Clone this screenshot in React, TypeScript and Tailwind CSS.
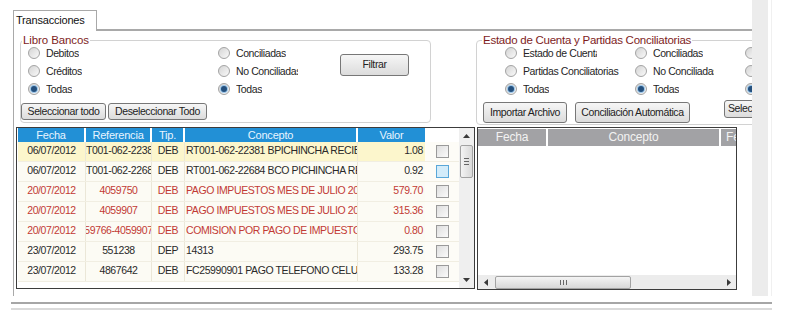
import React from "react";

type Row = {
  fecha: string;
  ref: string;
  tip: string;
  concepto: string;
  valor: string;
  red?: boolean;
  selected?: boolean;
  hover?: boolean;
};

const ROWS: Row[] = [
  { fecha: "06/07/2012", ref: "RT001-062-22381", tip: "DEB", concepto: "RT001-062-22381 BPICHINCHA RECIBO", valor: "1.08", selected: true },
  { fecha: "06/07/2012", ref: "RT001-062-22684", tip: "DEB", concepto: "RT001-062-22684 BCO PICHINCHA RET", valor: "0.92", hover: true },
  { fecha: "20/07/2012", ref: "4059750", tip: "DEB", concepto: "PAGO IMPUESTOS MES DE JULIO 2012", valor: "579.70", red: true },
  { fecha: "20/07/2012", ref: "4059907", tip: "DEB", concepto: "PAGO IMPUESTOS MES DE JULIO 2012", valor: "315.36", red: true },
  { fecha: "20/07/2012", ref: "59766-4059907", tip: "DEB", concepto: "COMISION POR PAGO DE IMPUESTO A LA RENTA", valor: "0.80", red: true },
  { fecha: "23/07/2012", ref: "551238", tip: "DEP", concepto: "14313", valor: "293.75" },
  { fecha: "23/07/2012", ref: "4867642", tip: "DEB", concepto: "FC25990901 PAGO TELEFONO CELULAR", valor: "133.28" },
];

const Radio = ({ label, checked, w }: { label: string; checked?: boolean; w?: string }) => (
  <div className="flex items-center h-[18px]">
    <div className="w-[12px] h-[12px] shrink-0 rounded-full border border-[#a3a3a3] bg-linear-to-br from-[#d4d4d4] to-[#fafafa] flex items-center justify-center">
      {checked && <div className="w-[6px] h-[6px] rounded-full bg-[#24507e] ring-1 ring-[#9cc7ea]" />}
    </div>
    <span className={`ml-[6px] whitespace-nowrap overflow-hidden leading-[14px] ${w ?? ""}`}>{label}</span>
  </div>
);

const Btn = ({ label, className }: { label: string; className: string }) => (
  <div
    className={`shrink-0 flex items-center justify-center whitespace-nowrap overflow-hidden border border-[#777] rounded-[3px] bg-linear-to-b from-[#f6f6f6] to-[#dcdcdc] text-[#222] ${className}`}
  >
    {label}
  </div>
);

const Check = ({ hover }: { hover?: boolean }) => (
  <div
    className={`w-[13px] h-[13px] border ${
      hover ? "border-[#5aa7d8] bg-[#d3ecfa]" : "border-[#9a9a9a] bg-linear-to-br from-[#dedede] to-[#fbfbfb]"
    }`}
  />
);

const Arrow = ({ dir }: { dir: "up" | "down" | "left" | "right" }) => {
  const pts = {
    up: "0,4 3.5,0 7,4",
    down: "0,0 3.5,4 7,0",
    left: "4,0 0,3.5 4,7",
    right: "0,0 4,3.5 0,7",
  }[dir];
  const vertical = dir === "up" || dir === "down";
  return (
    <svg width={vertical ? 7 : 4} height={vertical ? 4 : 7} viewBox={vertical ? "0 0 7 4" : "0 0 4 7"}>
      <polygon points={pts} fill="#3a3a3a" />
    </svg>
  );
};

const COLS = [
  { name: "Fecha", w: "w-[68px]", sep: true },
  { name: "Referencia", w: "w-[66px]", sep: true },
  { name: "Tip.", w: "w-[33px]", sep: true },
  { name: "Concepto", w: "w-[173px]", sep: true },
  { name: "Valor", w: "w-[67px]", sep: false },
];

const LibroTable = () => (
  <div className="shrink-0 ml-[2px] w-[459px] h-[162px] border border-[#3c3c3c] flex bg-white">
    <div className="w-[442px] pl-[1px] flex flex-col">
      <div className="flex h-[14px] shrink-0 text-[11px] tracking-[-0.2px]">
        {COLS.map((c) => (
          <div
            key={c.name}
            className={`${c.w} h-full bg-[#2290d6] text-[#e8f5ff] text-center leading-[14px] ${c.sep ? "border-r-2 border-white" : ""}`}
          >
            {c.name}
          </div>
        ))}
      </div>
      {ROWS.map((r, i) => {
        const tc = r.red ? "text-[#c23a34]" : "text-[#2a2a2a]";
        const bg = r.selected ? "bg-[#fcf6cc]" : "bg-[#fcfbf4]";
        return (
          <div key={i} className="flex h-[20px] border-b border-[#f1eee2]">
            <div className={`flex ${bg} ${tc} leading-[17px]`}>
              <div className="w-[68px] text-center border-r border-[#ebe7d8]">{r.fecha}</div>
              <div className="w-[66px] flex justify-center overflow-hidden whitespace-nowrap border-r border-[#ebe7d8]">
                <span className="shrink-0">{r.ref}</span>
              </div>
              <div className="w-[33px] text-center border-r border-[#ebe7d8]">{r.tip}</div>
              <div className="w-[173px] pl-[1px] overflow-hidden whitespace-nowrap border-r border-[#ebe7d8]">{r.concepto}</div>
              <div className="w-[67px] text-right pr-[2px]">{r.valor}</div>
            </div>
            <div className="w-[34px] bg-[#fdfcf7] flex items-center justify-center pl-[1px]">
              <Check hover={r.hover} />
            </div>
          </div>
        );
      })}
    </div>
    <div className="w-[15px] bg-[#efefef] flex flex-col items-center">
      <div className="h-[16px] flex items-center justify-center">
        <Arrow dir="up" />
      </div>
      <div className="w-[13px] h-[33px] mt-px border border-[#a2a2a2] rounded-[2px] bg-linear-to-r from-[#f4f4f4] to-[#d8d8d8] flex flex-col items-center justify-center gap-[2px]">
        <div className="w-[5px] h-px bg-[#666]" />
        <div className="w-[5px] h-px bg-[#666]" />
        <div className="w-[5px] h-px bg-[#666]" />
      </div>
      <div className="flex-1" />
      <div className="h-[16px] flex items-center justify-center">
        <Arrow dir="down" />
      </div>
    </div>
  </div>
);

const EstadoTable = () => (
  <div className="shrink-0 ml-[2px] w-[260px] h-[163px] border border-[#3c3c3c] flex flex-col bg-white overflow-hidden">
    <div className="flex h-[17px] mt-px shrink-0 text-[#f2f2f2] text-[12px] tracking-[-0.2px] leading-[17px]">
      <div className="w-[70px] shrink-0 bg-[#a2a2a5] text-center border-r-2 border-white">Fecha</div>
      <div className="w-[173px] shrink-0 bg-[#a2a2a5] text-center border-r-2 border-white">Concepto</div>
      <div className="flex-1 bg-[#a2a2a5] overflow-hidden whitespace-nowrap pl-[5px]">Fecha</div>
    </div>
    <div className="flex-1" />
    <div className="h-[14px] bg-[#ececec] flex items-center">
      <div className="w-[15px] flex justify-center">
        <Arrow dir="left" />
      </div>
      <div className="ml-[2px] w-[136px] h-[13px] border border-[#a2a2a2] rounded-[2px] bg-linear-to-b from-[#f4f4f4] to-[#d8d8d8] flex items-center justify-center gap-[2px]">
        <div className="w-px h-[5px] bg-[#666]" />
        <div className="w-px h-[5px] bg-[#666]" />
        <div className="w-px h-[5px] bg-[#666]" />
      </div>
      <div className="flex-1" />
      <div className="w-[15px] flex justify-center">
        <Arrow dir="right" />
      </div>
    </div>
  </div>
);

export default function App() {
  return (
    <div className="w-[800px] h-[321px] bg-white overflow-hidden font-['Liberation_Sans',Arial,sans-serif] text-[10.5px] tracking-[-0.4px] text-[#262626]">
      <div className="flex h-[296px]">
        <div className="w-[752px] shrink-0 pl-[13px] pt-[10px] flex flex-col overflow-hidden">
          <div className="flex h-[21px] shrink-0">
            <div className="w-[84px] shrink-0 border border-b-0 border-[#a9a9a9] bg-white pl-[2px] leading-[19px] text-[11px] tracking-[-0.2px] text-[#111]">
              Transacciones
            </div>
            <div className="flex-1 border-b-2 border-[#a9a9a9]" />
          </div>
          <div className="flex-1 border-l border-[#a9a9a9] flex flex-col">
            <div className="flex items-start mt-[9px] h-[85px] shrink-0">
              {/* Libro Bancos */}
              <div className="relative shrink-0 ml-[6px] w-[411px] h-[83px] border border-[#d2d2d2] rounded-[4px]">
                <span className="absolute left-[1px] top-[-8px] px-[1px] bg-white text-[11.5px] tracking-[-0.1px] leading-[14px] text-[#7e1d1d]">
                  Libro Bancos
                </span>
                <div className="flex pt-[3px]">
                  <div className="ml-[7px] w-[190px] shrink-0">
                    <Radio label="Debitos" />
                    <Radio label="Créditos" />
                    <Radio label="Todas" checked />
                  </div>
                  <div className="w-[122px] shrink-0">
                    <Radio label="Conciliadas" />
                    <Radio label="No Conciliadas" w="w-[62px]" />
                    <Radio label="Todas" checked />
                  </div>
                  <Btn label="Filtrar" className="mt-[10px] w-[69px] h-[22px]" />
                </div>
                <div className="flex gap-[2px] mt-[5px]">
                  <Btn label="Seleccionar todo" className="w-[85px] h-[17px]" />
                  <Btn label="Deseleccionar Todo" className="w-[99px] h-[17px]" />
                </div>
              </div>
              {/* Estado de Cuenta */}
              <div className="relative shrink-0 ml-[45px] w-[300px] h-[85px] border border-[#d2d2d2] rounded-[4px]">
                <span className="absolute left-[5px] top-[-8px] px-[1px] bg-white text-[11.5px] tracking-[-0.25px] leading-[14px] text-[#7e1d1d] whitespace-nowrap">
                  Estado de Cuenta y Partidas Conciliatorias
                </span>
                <div className="flex pt-[3px]">
                  <div className="ml-[28px] w-[130px] shrink-0">
                    <Radio label="Estado de Cuenta" w="w-[74px]" />
                    <Radio label="Partidas Conciliatorias" w="w-[106px]" />
                    <Radio label="Todas" checked />
                  </div>
                  <div className="w-[110px] shrink-0">
                    <Radio label="Conciliadas" />
                    <Radio label="No Conciliadas" w="w-[61px]" />
                    <Radio label="Todas" checked />
                  </div>
                  <div className="shrink-0">
                    <Radio label="Todos" />
                    <Radio label="Todos" />
                    <Radio label="Todas" checked />
                  </div>
                </div>
                <div className="flex mt-[4px] items-start">
                  <Btn label="Importar Archivo" className="ml-[6px] w-[84px] h-[21px]" />
                  <Btn label="Conciliación Automática" className="ml-[8px] w-[115px] h-[21px]" />
                  <Btn label="Seleccionar todo" className="ml-[34px] -mt-[2px] w-[85px] h-[18px] justify-start pl-[3px]" />
                </div>
              </div>
            </div>
            <div className="flex mt-[2px]">
              <LibroTable />
              <EstadoTable />
            </div>
          </div>
        </div>
        <div className="w-[16px] shrink-0 bg-[#ececec]" />
        <div className="w-[3px] shrink-0" />
        <div className="w-px shrink-0 bg-[#f0f0f0]" />
      </div>
      <div className="ml-[11px] mt-[6px] w-[761px] h-[2px] bg-[#a6a6a6]" />
      <div className="ml-[11px] mt-[4px] w-[761px] h-[2px] bg-[#dadada]" />
    </div>
  );
}
